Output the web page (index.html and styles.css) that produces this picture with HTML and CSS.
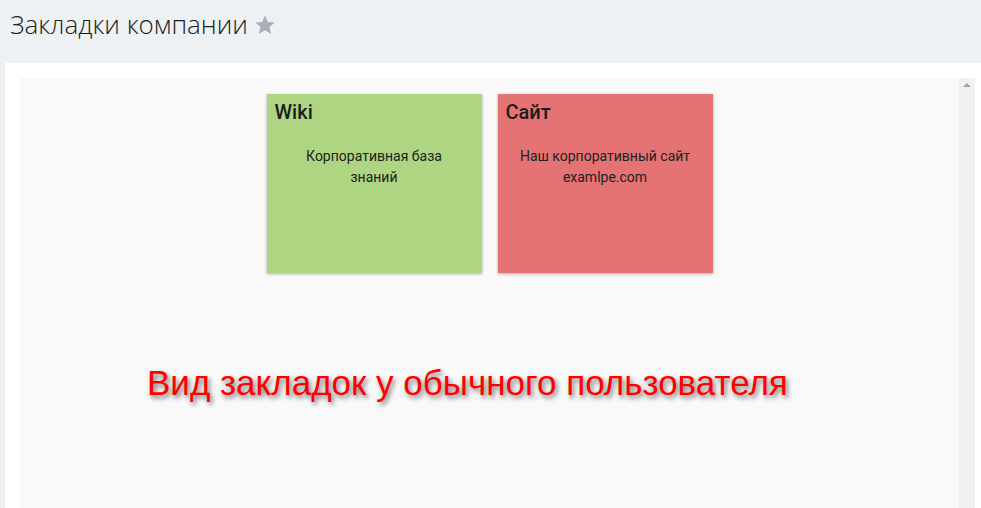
FILE: index.html
```html
<!DOCTYPE html>
<html lang="ru">
<head>
<meta charset="utf-8">
<title>Закладки компании</title>
<link rel="stylesheet" href="styles.css">
</head>
<body>
<header class="page-header">
  <h1 class="page-title">Закладки компании<svg class="star" viewBox="0 0 24 24" width="22" height="22"><path d="M12 1.5l3.1 7.1 7.6.6-5.8 5 1.8 7.5L12 17.7l-6.7 4 1.8-7.5-5.8-5 7.6-.6z" fill="#aab0b9"/></svg></h1>
</header>
<main class="panel">
  <div class="viewport">
    <div class="content">
      <div class="cards">
        <div class="card card-green">
          <div class="card-title">Wiki</div>
          <div class="card-text">Корпоративная база знаний</div>
        </div>
        <div class="card card-red">
          <div class="card-title">Сайт</div>
          <div class="card-text">Наш корпоративный сайт examlpe.com</div>
        </div>
      </div>
      <div class="note">Вид закладок у обычного пользователя</div>
    </div>
    <div class="scrollbar"><span class="arrow-up"></span></div>
  </div>
</main>
</body>
</html>
```
FILE: styles.css
```css
html, body {
  margin: 0;
  padding: 0;
  height: 100%;
  overflow: hidden;
}
body {
  background: #edf1f4;
  font-family: Roboto, "Liberation Sans", sans-serif;
}
.page-header {
  height: 63px;
  padding-left: 10px;
  box-sizing: border-box;
}
.page-title {
  margin: 0;
  padding-top: 6px;
  font-family: "Open Sans", sans-serif;
  font-weight: 300;
  font-size: 26px;
  line-height: 36px;
  color: #1e1e1e;
  display: flex;
  align-items: center;
}
.star {
  margin-left: 6px;
  margin-top: 2px;
}
.panel {
  margin-left: 5px;
  background: #fff;
  padding: 15px 6px 0 15px;
  height: calc(100% - 63px);
  box-sizing: border-box;
}
.viewport {
  display: flex;
  height: 100%;
  background: #f9f9f9;
}
.content {
  flex: 1;
  position: relative;
  padding-top: 16px;
}
.cards {
  display: flex;
  justify-content: center;
  gap: 16px;
}
.card {
  width: 215px;
  height: 179px;
  box-sizing: border-box;
  padding: 7px 8px;
  box-shadow: 0 1px 3px rgba(0,0,0,0.3);
  color: #1f1f1f;
}
.card-green { background: #aed581; }
.card-red { background: #e57373; }
.card-title {
  font-family: Roboto, sans-serif;
  font-weight: 500;
  font-size: 20px;
  line-height: 22px;
  color: #1c1c1c;
}
.card-text {
  margin-top: 23px;
  padding: 0 10px;
  text-align: center;
  font-size: 14px;
  line-height: 21px;
  color: #222;
}
.note {
  position: absolute;
  left: 127px;
  top: 285px;
  font-family: "Liberation Sans", Arial, sans-serif;
  font-size: 35px;
  line-height: 40px;
  color: #ff0000;
  text-shadow: 2px 3px 5px rgba(0,0,0,0.55);
  white-space: nowrap;
}
.scrollbar {
  width: 16px;
  background: #f1f1f1;
  position: relative;
}
.arrow-up {
  position: absolute;
  left: 4px;
  top: 5px;
  width: 0;
  height: 0;
  border-left: 4px solid transparent;
  border-right: 4px solid transparent;
  border-bottom: 4px solid #a3a3a3;
}
```
